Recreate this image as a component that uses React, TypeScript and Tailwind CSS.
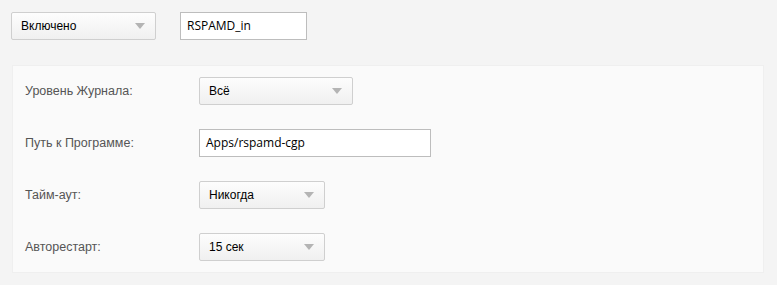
const sans = "font-['Liberation_Sans',Arial,sans-serif]"

function Select({ value, width }: { value: string; width: string }) {
  return (
    <div
      className={`${width} h-[28px] flex items-center justify-between pl-[9px] pr-[10px] border border-[#cfcfcf] rounded-[2px] bg-gradient-to-b from-[#fdfdfd] to-[#f0f0f0] text-[12px] text-black ${sans}`}
    >
      <span>{value}</span>
      <svg width="10" height="6" viewBox="0 0 10 6" className="shrink-0">
        <path d="M0 0 H10 L5 6 Z" fill="#b4b4b4" />
      </svg>
    </div>
  )
}

function TextInput({ value, width }: { value: string; width: string }) {
  return (
    <div
      className={`${width} h-[28px] flex items-center px-[6px] border border-[#bdbdbd] bg-white text-[12px] text-black font-['Open_Sans',sans-serif]`}
    >
      {value}
    </div>
  )
}

function Row({ label, children }: { label: string; children: React.ReactNode }) {
  return (
    <div className="flex items-center h-[28px]">
      <div className={`w-[186px] pl-[12px] text-[12.5px] text-[#555] ${sans}`}>{label}</div>
      {children}
    </div>
  )
}

export default function App() {
  return (
    <div className="w-[777px] h-[285px] bg-[#f4f4f4] pt-[12px]">
      <div className="flex items-center gap-[24px] pl-[11px]">
        <Select value="Включено" width="w-[145px]" />
        <TextInput value="RSPAMD_in" width="w-[127px]" />
      </div>
      <div className="mt-[25px] ml-[12px] w-[752px] h-[208px] bg-[#fafafa] border border-[#efefef] py-[11px] flex flex-col gap-[24px]">
        <Row label="Уровень Журнала:">
          <Select value="Всё" width="w-[154px]" />
        </Row>
        <Row label="Путь к Программе:">
          <TextInput value="Apps/rspamd-cgp" width="w-[232px]" />
        </Row>
        <Row label="Тайм-аут:">
          <Select value="Никогда" width="w-[126px]" />
        </Row>
        <Row label="Авторестарт:">
          <Select value="15 сек" width="w-[126px]" />
        </Row>
      </div>
    </div>
  )
}
